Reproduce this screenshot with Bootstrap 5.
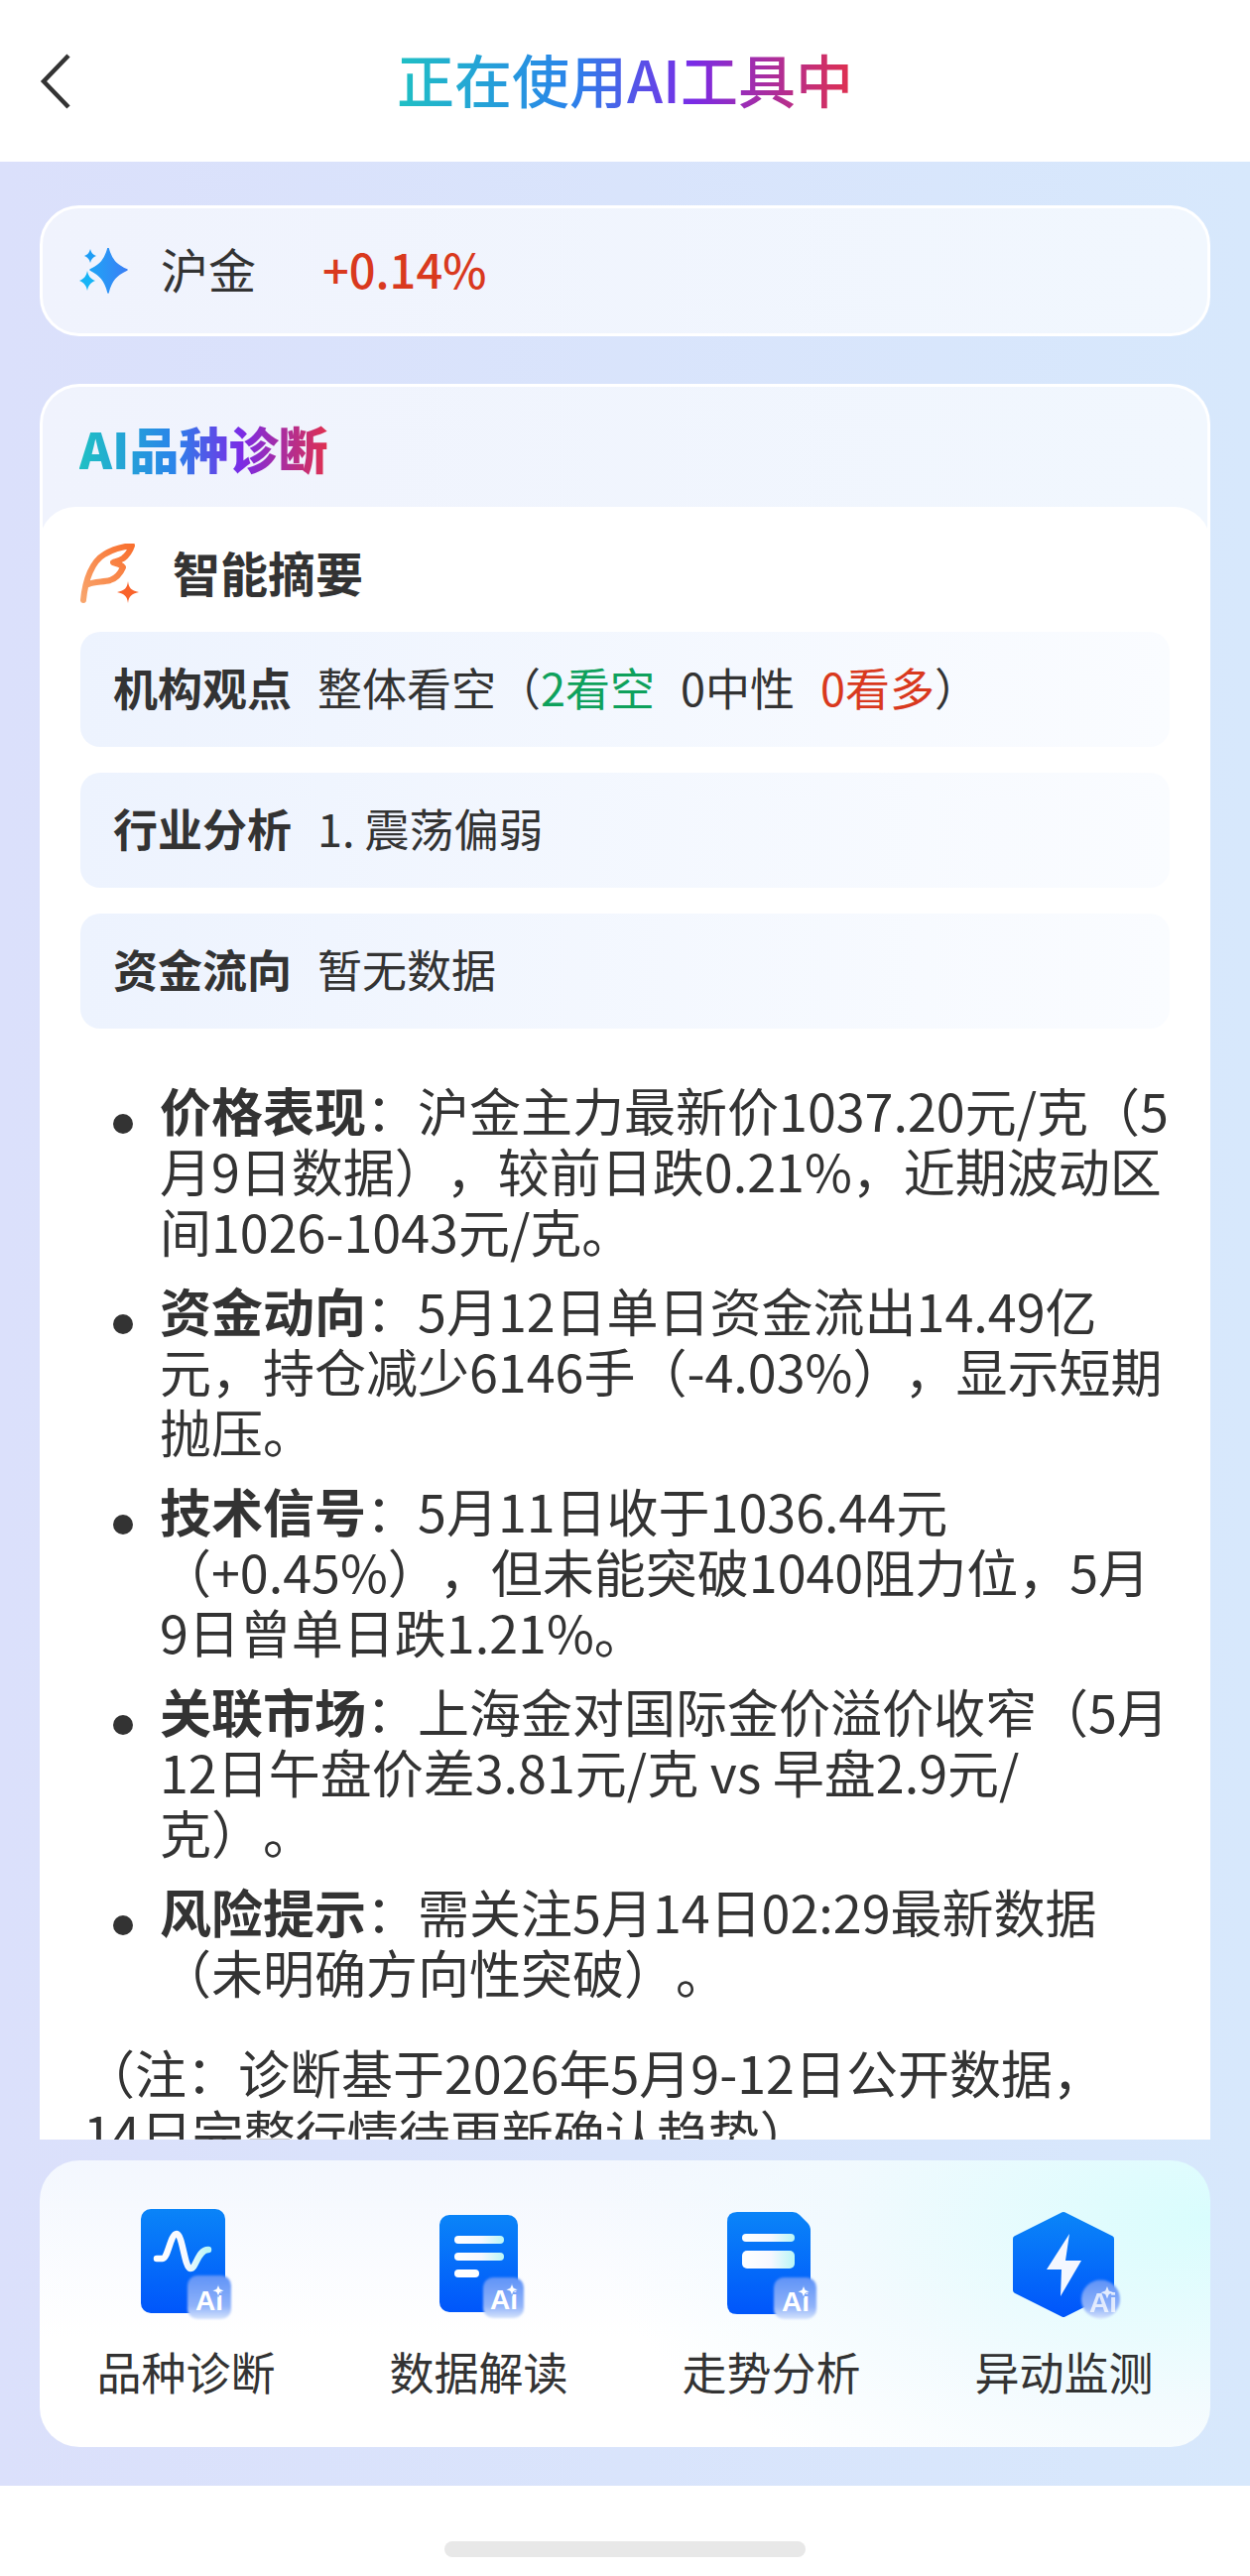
<!DOCTYPE html>
<html lang="zh-CN">
<head>
  <meta charset="UTF-8" />
  <meta name="viewport" content="width=device-width, initial-scale=1.0"/>
  <title>正在使用AI工具中</title>
  <link href="https://cdn.jsdelivr.net/npm/bootstrap@5.3.0/dist/css/bootstrap.min.css" rel="stylesheet"/>
  <style>
    body { margin: 0; background: #fff; color: #333; font-family: "Noto Sans CJK SC", "Noto Sans", sans-serif; text-spacing-trim: space-all; }
    .screen { width: 1260px; height: 2597px; }
    .top-bar { height: 163px; display: grid; grid-template-columns: 1fr auto 1fr; align-items: center; }
    .back-btn { padding-left: 40px; display: flex; }
    .grad-text { background: linear-gradient(90deg, #1fc0c4 0%, #2a84ea 38%, #7a2be6 65%, #e0304e 100%); -webkit-background-clip: text; background-clip: text; color: transparent; }
    .page-title { font-size: 58px; font-weight: 500; line-height: 1; margin: 0 0 6px; }
    .main-area { background: linear-gradient(90deg, #dbe0fb 0%, #d7e8fc 100%); padding: 44px 40px 39px; min-height: 0; }
    .glass-card { background: linear-gradient(90deg, #f0f3fd, #f1f7fe); border: 3px solid #fff; border-radius: 40px; }
    .quote-card { height: 132px; padding-left: 37px; margin-bottom: 48px; flex-shrink: 0; }
    .quote-name { font-size: 48px; margin-left: 32px; width: 163px; line-height: 1; padding-bottom: 6px; }
    .quote-pct { font-size: 47px; font-weight: 500; color: #d9391e; line-height: 1; padding-bottom: 6px; }
    .diag-panel { min-height: 0; overflow: hidden; border-bottom: 0; border-radius: 40px 40px 0 0; }
    .diag-title-wrap { height: 121px; padding: 31px 0 0 37px; }
    .diag-title { font-size: 50px; font-weight: 900; line-height: 60px; display: inline-block; }
    .diag-body { background: #fff; border-radius: 36px 36px 0 0; padding: 37px 41px 0; margin: 0 -3px; height: 100%; }
    .sum-head { font-size: 48px; font-weight: 700; line-height: 48px; margin-bottom: 28px; }
    .sum-head svg { margin-right: 33px; }
    .sum-head span { padding-bottom: 6px; }
    .info-row { height: 116px; border-radius: 20px; background: linear-gradient(90deg, #edf3fe, #fafcff); padding: 0 0 6px 33px; margin-bottom: 26px; font-size: 45px; line-height: 1; }
    .info-row b { font-weight: 700; margin-right: 26px; }
    .txt-green { color: #0ea15c; }
    .txt-red { color: #d9391e; }
    .gap-left { margin-left: 26px; }
    .bullet-list { margin: 51px 0 40px; padding: 0 0 0 80px; list-style: none; font-size: 52px; line-height: 61px; }
    .bullet-list li { position: relative; margin-bottom: 19px; }
    .bullet-list li::before { content: ""; position: absolute; left: -47px; top: 35px; width: 20px; height: 20px; border-radius: 50%; background: #333; }
    .bullet-list b { font-weight: 700; }
    .note-text { font-size: 52px; line-height: 61px; padding-left: 3px; margin: 0; }
    .tool-card { height: 289px; margin-top: 21px; border-radius: 40px; flex-shrink: 0; padding-top: 46px; background: radial-gradient(ellipse 620px 320px at 100% 20%, #d9fdfd 0%, rgba(240,250,254,0.8) 60%, rgba(255,255,255,0) 100%), linear-gradient(180deg, #f3f7fe 0%, #fff 62%); }
    .tool-item { flex: 1 1 0; }
    .tool-item svg { display: block; }
    .tool-label { font-size: 45px; line-height: 60px; margin-top: 17px; }
    .bottom-bar { height: 91px; flex-shrink: 0; padding-top: 56px; }
    .home-bar { width: 364px; height: 16px; border-radius: 8px; background: #e8e8e8; }
    .badge-ai { font-family: "Liberation Sans", sans-serif; font-size: 28px; font-weight: 700; fill: #fff; }
  </style>
</head>
<body>
  <svg width="0" height="0" class="position-absolute">
    <defs>
      <linearGradient id="blueFill" x1="0" y1="0" x2="0" y2="1">
        <stop offset="0" stop-color="#0a84f8"/><stop offset="1" stop-color="#0056fb"/>
      </linearGradient>
      <linearGradient id="barFill" x1="0" y1="0" x2="1" y2="0">
        <stop offset="0" stop-color="#fff"/><stop offset="0.55" stop-color="#f6f8ff"/><stop offset="1" stop-color="#b9f6f6"/>
      </linearGradient>
      <linearGradient id="glassFill" x1="0" y1="0" x2="0" y2="1">
        <stop offset="0" stop-color="#5f93f8"/><stop offset="0.7" stop-color="#8fb2f9"/><stop offset="1" stop-color="#d5e3fc"/>
      </linearGradient>
      <linearGradient id="orangeFill" x1="1" y1="0" x2="0" y2="1">
        <stop offset="0" stop-color="#f9702f"/><stop offset="1" stop-color="#f8a56c"/>
      </linearGradient>
      <linearGradient id="starFill" x1="0" y1="0" x2="1" y2="0">
        <stop offset="0" stop-color="#1fa4f6"/><stop offset="1" stop-color="#3a7ff5"/>
      </linearGradient>
      <filter id="softEdge" x="-10%" y="-10%" width="120%" height="120%"><feGaussianBlur stdDeviation="0.8"/></filter>
    </defs>
  </svg>

  <div class="screen d-flex flex-column">
    <div class="top-bar flex-shrink-0">
      <div class="back-btn">
        <svg width="32" height="56" viewBox="0 0 32 56"><path d="M29 2 L4 28 L29 54" fill="none" stroke="#333" stroke-width="4.5"/></svg>
      </div>
      <h1 class="page-title"><span class="grad-text">正在使用AI工具中</span></h1>
      <div></div>
    </div>

    <div class="main-area flex-grow-1 d-flex flex-column">
      <div class="glass-card quote-card d-flex align-items-center">
        <svg width="50" height="46" viewBox="0 0 50 46">
          <path d="M29 0 C32 12 37 17 48 22 C37 27 32 33 29 45 C26 33 21 27 11 22 C21 17 26 12 29 0Z" fill="url(#starFill)" stroke="url(#starFill)" stroke-width="1.5" stroke-linejoin="round"/>
          <path d="M11 1 C12 5 14 7 17 8 C14 9 12 11 11 15 C10 11 8 9 5 8 C8 7 10 5 11 1Z" fill="#1e9df5"/>
          <path d="M8 23 C9 28 11 31 16 33 C11 35 9 38 8 43 C7 38 5 35 0 33 C5 31 7 28 8 23Z" fill="#17b4f6"/>
        </svg>
        <div class="quote-name">沪金</div>
        <div class="quote-pct">+0.14%</div>
      </div>

      <div class="glass-card diag-panel flex-grow-1 d-flex flex-column">
        <div class="diag-title-wrap flex-shrink-0"><span class="diag-title grad-text">AI品种诊断</span></div>
        <div class="diag-body">
          <div class="sum-head d-flex align-items-center">
            <svg width="60" height="61" viewBox="0 0 60 61">
              <path d="M3 57 C5 36 12 18 24 11 C32 6 43 3 52 2 C50 8 47 12 43 15 C40 17 36 18 33 19 C37 20 41 21 43 24 C40 31 36 35 30 37 C23 39 14 38 8 41" fill="none" stroke="url(#orangeFill)" stroke-width="6" stroke-linejoin="round" stroke-linecap="round"/>
              <path d="M48 38 C49 45 51 47 59 49 C51 51 49 53 48 60 C47 53 45 51 37 49 C45 47 47 45 48 38Z" fill="#f9632b"/>
            </svg>
            <span>智能摘要</span>
          </div>
          <div class="info-row d-flex align-items-center"><b>机构观点</b><span>整体看空（<span class="txt-green">2看空</span><span class="gap-left">0中性</span><span class="gap-left txt-red">0看多</span>）</span></div>
          <div class="info-row d-flex align-items-center"><b>行业分析</b><span>1. 震荡偏弱</span></div>
          <div class="info-row d-flex align-items-center"><b>资金流向</b><span>暂无数据</span></div>

          <ul class="bullet-list">
            <li><b>价格表现</b>：沪金主力最新价1037.20元/克（5月9日数据），较前日跌0.21%，近期波动区间1026-1043元/克。</li>
            <li><b>资金动向</b>：5月12日单日资金流出14.49亿元，持仓减少6146手（-4.03%），显示短期抛压。</li>
            <li><b>技术信号</b>：5月11日收于1036.44元（+0.45%），但未能突破1040阻力位，5月<br>9日曾单日跌1.21%。</li>
            <li><b>关联市场</b>：上海金对国际金价溢价收窄（5月12日午盘价差3.81元/克 vs 早盘2.9元/<br>克）。</li>
            <li><b>风险提示</b>：需关注5月14日02:29最新数据（未明确方向性突破）。</li>
          </ul>
          <p class="note-text">（注：诊断基于2026年5月9-12日公开数据，<br>14日完整行情待更新确认趋势）</p>
        </div>
      </div>

      <div class="tool-card d-flex">
        <div class="tool-item d-flex flex-column align-items-center">
          <svg width="120" height="120" viewBox="2 0 120 120">
            <rect x="16" y="3" width="85" height="105" rx="10" fill="url(#blueFill)"/>
            <path d="M32 53 H38 C43 53 46 28 52 28 C58 28 60 63 66 63 C72 63 73 44 84 44" fill="none" stroke="url(#barFill)" stroke-width="6.5" stroke-linecap="round"/>
            <rect x="63" y="70" width="44" height="44" rx="10" fill="url(#glassFill)" filter="url(#softEdge)"/>
            <text class="badge-ai" x="71" y="105">Ai</text>
            <path d="M94 79 l1.8 4.5 l4.7 1.8 l-4.7 1.8 l-1.8 4.5 l-1.8 -4.5 l-4.7 -1.8 l4.7 -1.8Z" fill="#fff" stroke="#6f9ff8" stroke-width=".8"/>
          </svg>
          <div class="tool-label">品种诊断</div>
        </div>
        <div class="tool-item d-flex flex-column align-items-center">
          <svg width="120" height="120" viewBox="0 0 120 120">
            <rect x="20" y="9" width="79" height="98" rx="10" fill="url(#blueFill)"/>
            <rect x="35" y="30" width="50" height="8" rx="4" fill="url(#barFill)"/>
            <rect x="35" y="47" width="50" height="8" rx="4" fill="url(#barFill)"/>
            <rect x="35" y="64" width="25" height="8" rx="4" fill="#fff"/>
            <rect x="64" y="72" width="41" height="41" rx="10" fill="url(#glassFill)" filter="url(#softEdge)"/>
            <text class="badge-ai" x="71" y="104">Ai</text>
            <path d="M93 78 l1.8 4.5 l4.7 1.8 l-4.7 1.8 l-1.8 4.5 l-1.8 -4.5 l-4.7 -1.8 l4.7 -1.8Z" fill="#fff" stroke="#6f9ff8" stroke-width=".8"/>
          </svg>
          <div class="tool-label">数据解读</div>
        </div>
        <div class="tool-item d-flex flex-column align-items-center">
          <svg width="120" height="120" viewBox="0 0 120 120">
            <path d="M25 6 H81 Q85 6 88 9 L96 17 Q99 20 99 25 V99 Q99 109 89 109 H25 Q15 109 15 99 V16 Q15 6 25 6Z" fill="url(#blueFill)"/>
            <rect x="30" y="28" width="53" height="8" rx="4" fill="url(#barFill)"/>
            <rect x="30" y="45" width="53" height="18" rx="5" fill="url(#barFill)"/>
            <rect x="62" y="72" width="43" height="42" rx="10" fill="url(#glassFill)" filter="url(#softEdge)"/>
            <text class="badge-ai" x="70" y="106">Ai</text>
            <path d="M92 80 l1.8 4.5 l4.7 1.8 l-4.7 1.8 l-1.8 4.5 l-1.8 -4.5 l-4.7 -1.8 l4.7 -1.8Z" fill="#fff" stroke="#6f9ff8" stroke-width=".8"/>
          </svg>
          <div class="tool-label">走势分析</div>
        </div>
        <div class="tool-item d-flex flex-column align-items-center">
          <svg width="120" height="120" viewBox="-2 0 120 120">
            <path d="M57 9 L105 33 V85 L57 109 L9 85 V33Z" fill="url(#blueFill)" stroke="url(#blueFill)" stroke-width="6" stroke-linejoin="round"/>
            <path d="M63 28 L40 64 H55 L54 91 L75 55 H59Z" fill="#f4f7ff"/>
            <circle cx="94.5" cy="94" r="19.5" fill="url(#glassFill)" filter="url(#softEdge)"/>
            <text class="badge-ai" x="83" y="107" opacity=".75">Ai</text>
            <path d="M101 81 l1.8 4.5 l4.7 1.8 l-4.7 1.8 l-1.8 4.5 l-1.8 -4.5 l-4.7 -1.8 l4.7 -1.8Z" fill="#fff" opacity=".8"/>
          </svg>
          <div class="tool-label">异动监测</div>
        </div>
      </div>
    </div>

    <div class="bottom-bar d-flex justify-content-center">
      <div class="home-bar"></div>
    </div>
  </div>
  <script src="https://cdn.jsdelivr.net/npm/bootstrap@5.3.0/dist/js/bootstrap.bundle.min.js"></script>
</body>
</html>
